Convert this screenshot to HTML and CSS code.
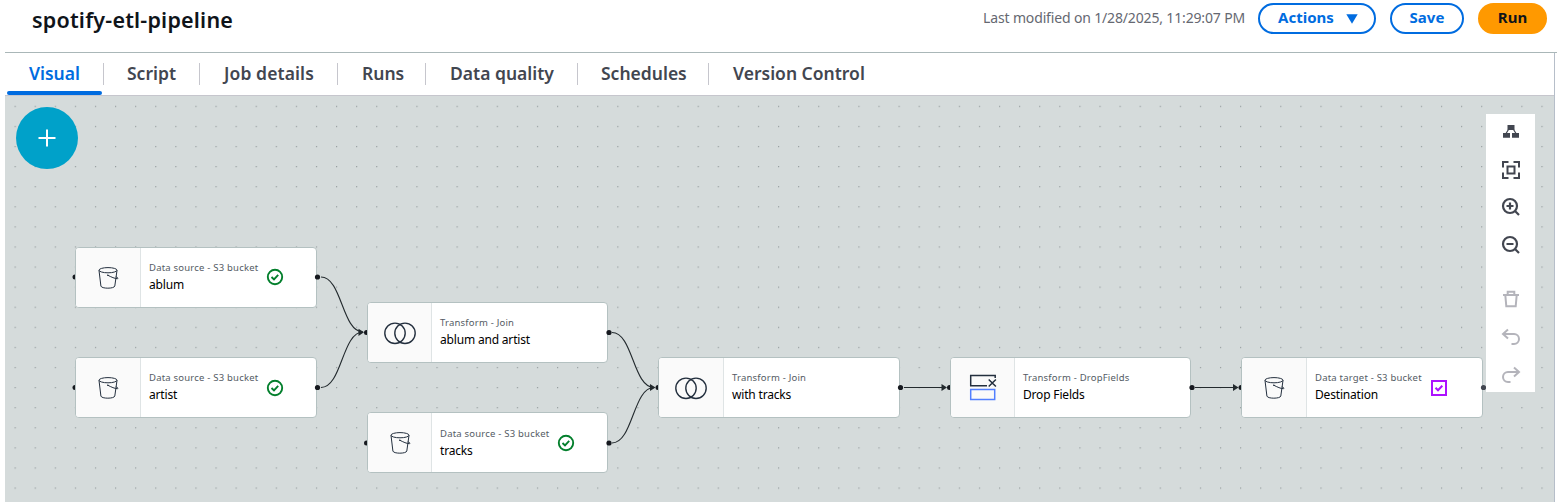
FILE: index.html
```html
<!DOCTYPE html>
<html lang="en">
<head>
<meta charset="utf-8">
<title>spotify-etl-pipeline</title>
<link rel="stylesheet" href="styles.css">
</head>
<body>
<svg class="defs" width="0" height="0" aria-hidden="true">
  <symbol id="bucket" viewBox="0 0 22 24"><g fill="none" stroke="#232f3e" stroke-width="1"><ellipse cx="11" cy="4.200" rx="9" ry="2.600"/><path d="M2 4.400 3.900 20c.3 2.900 13.500 2.900 13.900 0L20 4.400M10.800 9.200c3 1.700 7.500 3.600 9.600 3.500 1.200-.2.300-1.400-1.600-1.900"/></g><circle cx="10.800" cy="9.200" r=".8" fill="#232f3e"/></symbol>
  <symbol id="join" viewBox="0 0 32 24"><g fill="none" stroke="#232f3e" stroke-width="1.400"><circle cx="11" cy="12.300" r="10.200"/><circle cx="21" cy="12.300" r="10.200"/></g></symbol>
  <symbol id="ok" viewBox="0 0 18 18"><g fill="none" stroke="#037f2c" stroke-width="1.900"><circle cx="9" cy="9" r="7.200"/><path d="m5.500 9 2.500 2.500 4.200-4.600"/></g></symbol>
</svg>

<header class="header">
  <h1 class="title">spotify-etl-pipeline</h1>
  <div class="actions">
    <span class="modified">Last modified on 1/28/2025, 11:29:07 PM</span>
    <button class="btn btn-actions"><span>Actions</span><svg class="caret" width="12" height="10" viewBox="0 0 12 10"><path d="M.3.300h11.400L6 9.700z" fill="#006ce0"/></svg></button>
    <button class="btn btn-save">Save</button>
    <button class="btn btn-run">Run</button>
  </div>
</header>

<main class="panel">
  <nav class="tabs">
    <a class="tab tab-visual active">Visual</a>
    <a class="tab tab-script">Script</a>
    <a class="tab tab-details">Job details</a>
    <a class="tab tab-runs">Runs</a>
    <a class="tab tab-quality">Data quality</a>
    <a class="tab tab-schedules">Schedules</a>
    <a class="tab tab-version">Version Control</a>
  </nav>

  <section class="canvas">
    <svg class="grid" viewBox="5 96 1549 406">
      <defs><pattern id="dots" x="5" y="96.200" width="20.090" height="20.090" patternUnits="userSpaceOnUse"><circle cx="10.200" cy="10.200" r=".6" fill="#858d8f"/></pattern></defs>
      <rect x="5" y="96" width="1549" height="406" fill="url(#dots)"/>
    </svg>

    <svg class="edges" viewBox="5 96 1549 406">
      <g fill="#16191f"><circle cx="75" cy="277" r="2.500"/><circle cx="75" cy="387.500" r="2.500"/><circle cx="366.500" cy="332.500" r="2.500"/><circle cx="366.500" cy="443" r="2.500"/><circle cx="658" cy="387.500" r="2.500"/><circle cx="949.500" cy="387.500" r="2.500"/><circle cx="1241" cy="387.500" r="2.500"/></g>
    </svg>

    <article class="node n-ablum">
      <div class="node-icon"><svg width="22" height="24"><use href="#bucket"/></svg></div>
      <div class="node-text"><span class="kind">Data source - S3 bucket</span><span class="name">ablum</span></div>
      <svg class="status" width="18" height="18"><use href="#ok"/></svg>
    </article>
    <article class="node n-artist">
      <div class="node-icon"><svg width="22" height="24"><use href="#bucket"/></svg></div>
      <div class="node-text"><span class="kind">Data source - S3 bucket</span><span class="name">artist</span></div>
      <svg class="status" width="18" height="18"><use href="#ok"/></svg>
    </article>
    <article class="node n-join">
      <div class="node-icon"><svg width="32" height="24"><use href="#join"/></svg></div>
      <div class="node-text"><span class="kind">Transform - Join</span><span class="name">ablum and artist</span></div>
    </article>
    <article class="node n-tracks">
      <div class="node-icon"><svg width="22" height="24"><use href="#bucket"/></svg></div>
      <div class="node-text"><span class="kind">Data source - S3 bucket</span><span class="name">tracks</span></div>
      <svg class="status" width="18" height="18"><use href="#ok"/></svg>
    </article>
    <article class="node n-with">
      <div class="node-icon"><svg width="32" height="24"><use href="#join"/></svg></div>
      <div class="node-text"><span class="kind">Transform - Join</span><span class="name">with tracks</span></div>
    </article>
    <article class="node n-drop">
      <div class="node-icon"><svg width="28" height="27" viewBox="0 0 28 27"><g fill="none" stroke-width="1.500"><path d="M26.200 4V1.500H1.700v10.200H18" stroke="#232f3e"/><path d="m19.700 5.500 7.200 7m0-7-7.200 7" stroke="#232f3e"/><path d="M1.700 15.500h24v10h-24z" stroke="#527fff"/></g></svg></div>
      <div class="node-text"><span class="kind">Transform - DropFields</span><span class="name">Drop Fields</span></div>
    </article>
    <article class="node n-dest">
      <div class="node-icon"><svg width="22" height="24"><use href="#bucket"/></svg></div>
      <div class="node-text"><span class="kind">Data target - S3 bucket</span><span class="name">Destination</span></div>
      <svg class="status" width="18" height="18" viewBox="0 0 18 18"><path d="M2 2h14v14H2zM5.500 8.700 8 11.200l4.300-4.500" fill="none" stroke="#ad11ff" stroke-width="2"/></svg>
    </article>

    <svg class="edges" viewBox="5 96 1549 406">
      <g fill="none" stroke="#232a2e" stroke-width="1.100">
        <path d="M321 277C342 277 342 332 363 332M321 387.500C342 387.500 342 332 363 332"/>
        <path d="M612 332.500C633 332.500 633 387.500 654 387.500M612 443C633 443 633 387.500 654 387.500"/>
        <path d="M904 387.500h40M1195 387.500h42"/>
      </g>
      <g fill="#232a2e"><path d="m358.500 328.700 5.500 3.600-5.500 3.600zM650 383.900l5.500 3.600-5.500 3.600zM941.500 383.900l5.500 3.600-5.500 3.600zM1233 383.900l5.500 3.600-5.500 3.600z"/></g>
      <g fill="#16191f"><circle cx="317.500" cy="277" r="2.600"/><circle cx="317.500" cy="387.500" r="2.600"/><circle cx="609" cy="332.500" r="2.600"/><circle cx="609" cy="443" r="2.600"/><circle cx="900.500" cy="387.500" r="2.600"/><circle cx="1192" cy="387.500" r="2.600"/><circle cx="1483.500" cy="387.500" r="2.600" fill="#424650"/></g>
    </svg>

    <button class="add" aria-label="Add node"><svg width="18" height="18" viewBox="0 0 18 18"><path d="M9 .5v17M.5 9h17" stroke="#fff" stroke-width="2"/></svg></button>

    <div class="toolbar">
      <svg class="tool t-layout" viewBox="0 0 20 20"><path d="M6.500 3h7v5h-7zM2 11h7v4.700H2zM11 11h7v4.700h-7z" fill="#424650"/><path d="M7.500 7.500 5 11.500M12.500 7.500l2.500 4" stroke="#424650" stroke-width="1.200"/></svg>
      <svg class="tool t-fit" viewBox="0 0 20 20"><path d="M2 7.500V2h5.500M12.500 2H18v5.500M18 12.500V18h-5.500M7.500 18H2v-5.500M6.500 6.500h7v7h-7z" fill="none" stroke="#424650" stroke-width="2"/></svg>
      <svg class="tool t-in" viewBox="0 0 20 20"><g fill="none" stroke="#424650" stroke-width="2.200"><circle cx="9" cy="9" r="7"/><path d="m14 14 4 4M5.500 9h7M9 5.500v7"/></g></svg>
      <svg class="tool t-out" viewBox="0 0 20 20"><g fill="none" stroke="#424650" stroke-width="2.200"><circle cx="9" cy="9" r="7"/><path d="m14 14 4 4M5.500 9h7"/></g></svg>
      <svg class="tool t-trash" viewBox="0 0 20 20"><path d="M2 6h16M6.700 6V2.700h6.600V6M4.300 6l1 11.300h9.400l1-11.300" fill="none" stroke="#b4b4bb" stroke-width="2"/></svg>
      <svg class="tool t-undo" viewBox="0 0 20 20"><path d="M7 2.500 2 7l5 4.500M2.500 7H13a5 5 0 0 1 0 10h-2.500" fill="none" stroke="#b4b4bb" stroke-width="2"/></svg>
      <svg class="tool t-redo" viewBox="0 0 20 20"><path d="M13 2.500 18 7l-5 4.500M17.500 7H7a5 5 0 0 0 0 10h2.500" fill="none" stroke="#b4b4bb" stroke-width="2"/></svg>
    </div>
  </section>
</main>
</body>
</html>
```
FILE: styles.css
```css
* { box-sizing: border-box; }
body { margin: 0; height: 502px; overflow: hidden; background: #fff; color: #0f141a; font-family: "Noto Sans", "Open Sans", sans-serif; }
svg { display: block; flex: none; }
.defs { position: absolute; }

.header { display: flex; justify-content: space-between; height: 53px; margin-left: 5px; padding: 0 10px 0 27px; border-bottom: 1px solid #aab7b8; }
.title { margin: 6px 0 0; font-size: 21.5px; line-height: 28px; font-weight: 650; letter-spacing: .2px; }
.actions { display: flex; align-items: flex-start; padding-top: 3px; white-space: nowrap; }
.modified { margin-right: 13px; color: #656871; font-size: 14px; line-height: 29px; letter-spacing: -.155px; }
.btn { display: flex; align-items: center; justify-content: center; height: 31px; padding: 0 0 3px; border: 2px solid #006ce0; border-radius: 16px; background: #fff; color: #006ce0; font: 700 15px/20px "Noto Sans", "Open Sans", sans-serif; }
.btn-actions { width: 118px; gap: 12px; margin-right: 14px; padding-left: 2px; }
.caret { margin-top: 3px; }
.btn-save { width: 74px; margin-right: 14px; }
.btn-run { width: 69px; border-color: #ff9900; background: #ff9900; color: #0f141a; }

.panel { width: 1550px; height: 449px; margin-left: 5px; border-right: 1px solid #b6bec9; }
.tabs { display: flex; height: 43px; border-bottom: 1px solid #c6c6cd; }
.tab { position: relative; padding: 7px 0 0 24px; color: #424650; font-size: 17.5px; line-height: 27px; font-weight: 600; white-space: nowrap; }
.tab + .tab::before { content: ""; position: absolute; left: 0; top: 10px; width: 1px; height: 22px; background: #c6c6cd; }
.tab-visual { width: 98px; }
.tab-script { width: 96px; }
.tab-details { width: 138px; padding-left: 25px; letter-spacing: .1px; }
.tab-runs { width: 88px; padding-left: 25px; }
.tab-quality { width: 152px; padding-left: 25px; }
.tab-schedules { width: 131px; }
.tab-version { padding-left: 25px; }
.active { color: #006ce0; }
.active::after { content: ""; position: absolute; left: 2px; bottom: 0; width: 95px; height: 4px; border-radius: 2px; background: #006ce0; }

.canvas { position: relative; height: 406px; overflow: hidden; background: #d5dbdb; }
.grid, .edges { position: absolute; left: 0; top: 0; width: 1549px; height: 406px; }
.node { position: absolute; display: flex; width: 242px; height: 61px; border: 1px solid #b4c1c1; border-radius: 4px; background: #fff; overflow: hidden; }
.n-ablum { left: 70px; top: 151px; }
.n-artist { left: 70px; top: 261px; }
.n-join { left: 362px; top: 206px; width: 241px; }
.n-tracks { left: 362px; top: 316px; width: 241px; }
.n-with { left: 653px; top: 261px; }
.n-drop { left: 945px; top: 261px; width: 241px; }
.n-dest { left: 1236px; top: 261px; }
.node-icon { display: flex; align-items: center; justify-content: center; width: 65px; border-right: 1px solid #dfe4e5; background: #fafafa; }
.n-join .node-icon, .n-tracks .node-icon, .n-drop .node-icon { width: 64px; }
.node-text { display: flex; flex-direction: column; padding: 12px 0 0 8px; white-space: nowrap; }
.n-tracks .node-text { padding-top: 13px; }
.kind { color: #545b64; font-size: 9.5px; line-height: 16px; letter-spacing: .21px; }
.name { color: #000; font-size: 12px; line-height: 18px; letter-spacing: -.18px; }
.status { position: absolute; left: 190px; top: 20px; }
.n-artist .status { top: 21px; }
.n-tracks .status { left: 189px; top: 21px; }
.n-dest .status { left: 188px; top: 21px; }

.add { position: absolute; left: 11px; top: 11px; display: flex; align-items: center; justify-content: center; width: 62px; height: 62px; padding: 0; border: 0; border-radius: 50%; background: #00a1c9; }
.toolbar { position: absolute; left: 1481px; top: 18px; display: flex; flex-direction: column; align-items: center; width: 49px; height: 278px; padding-top: 8px; background: #fff; }
.tool { width: 20px; height: 20px; margin-bottom: 18px; }
.t-fit { margin-bottom: 17px; }
.t-out { margin-bottom: 34px; }
```
